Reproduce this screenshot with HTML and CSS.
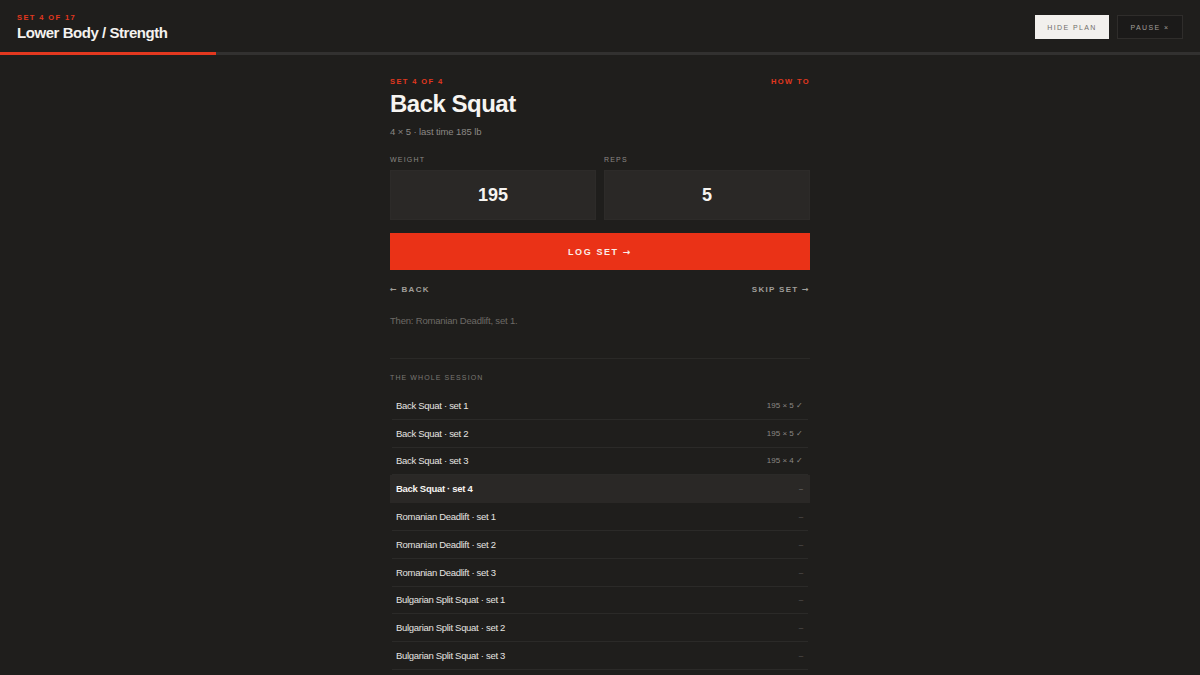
FILE: index.html
```html
<!DOCTYPE html>
<html lang="en">
<head>
    <meta charset="UTF-8">
    <meta name="viewport" content="width=device-width, initial-scale=1.0">
    <title>Lower Body / Strength</title>
    <link rel="stylesheet" href="styles.css">
</head>
<body>
    <header class="topbar">
        <div class="session-info">
            <div class="eyebrow">Set 4 of 17</div>
            <h1 class="session-title">Lower Body / Strength</h1>
        </div>
        <div class="topbar-actions">
            <button class="btn-light">Hide plan</button>
            <button class="btn-ghost">Pause &times;</button>
        </div>
    </header>
    <div class="progress"><div class="progress-fill" style="width: 18%"></div></div>

    <main class="workout">
        <div class="exercise-head">
            <span class="eyebrow">Set 4 of 4</span>
            <a class="eyebrow how-to" href="#">How to</a>
        </div>
        <h2 class="exercise-name">Back Squat</h2>
        <p class="exercise-meta">4 &times; 5 &middot; last time 185 lb</p>

        <form class="set-form" id="set-form">
            <div class="field">
                <label for="weight">Weight</label>
                <input type="text" id="weight" name="weight" value="195">
            </div>
            <div class="field">
                <label for="reps">Reps</label>
                <input type="text" id="reps" name="reps" value="5">
            </div>
            <button type="submit" class="btn-log">Log set <span class="arrow">&rarr;</span></button>
        </form>

        <div class="set-nav">
            <a href="#"><span class="arrow">&larr;</span> Back</a>
            <a href="#">Skip set <span class="arrow">&rarr;</span></a>
        </div>
        <p class="up-next">Then: Romanian Deadlift, set 1.</p>

        <section class="plan">
            <h3 class="plan-title">The whole session</h3>
            <ul class="plan-list">
                <li><span>Back Squat &middot; set 1</span><span class="result">195 &times; 5 &#10003;</span></li>
                <li><span>Back Squat &middot; set 2</span><span class="result">195 &times; 5 &#10003;</span></li>
                <li><span>Back Squat &middot; set 3</span><span class="result">195 &times; 4 &#10003;</span></li>
                <li class="current"><span>Back Squat &middot; set 4</span><span class="pending">&ndash;</span></li>
                <li><span>Romanian Deadlift &middot; set 1</span><span class="pending">&ndash;</span></li>
                <li><span>Romanian Deadlift &middot; set 2</span><span class="pending">&ndash;</span></li>
                <li><span>Romanian Deadlift &middot; set 3</span><span class="pending">&ndash;</span></li>
                <li><span>Bulgarian Split Squat &middot; set 1</span><span class="pending">&ndash;</span></li>
                <li><span>Bulgarian Split Squat &middot; set 2</span><span class="pending">&ndash;</span></li>
                <li><span>Bulgarian Split Squat &middot; set 3</span><span class="pending">&ndash;</span></li>
            </ul>
        </section>
    </main>
</body>
</html>
```

FILE: styles.css
```css
body {
    font-family: "Liberation Sans", Arial, sans-serif;
    background-color: #1f1e1c;
    color: #f2f0ed;
    margin: 0;
    padding: 0;
    overflow: hidden;
}
a {
    text-decoration: none;
}
button {
    font-family: inherit;
    cursor: pointer;
}
.arrow {
    font-family: "DejaVu Sans", sans-serif;
    font-weight: 700;
}

/* top bar */
.topbar {
    height: 52px;
    padding: 0 17px;
    box-sizing: border-box;
    display: flex;
    justify-content: space-between;
    align-items: center;
}
.session-info {
    padding-top: 3px;
}
.eyebrow {
    display: block;
    font-size: 7.5px;
    line-height: 10px;
    font-weight: 700;
    letter-spacing: 1.4px;
    text-transform: uppercase;
    color: #e2381f;
}
.session-title {
    margin: 0;
    font-size: 15px;
    line-height: 20px;
    font-weight: 700;
    letter-spacing: -0.45px;
    color: #f4f2ef;
}
.topbar-actions {
    display: flex;
    gap: 8px;
    padding-top: 2px;
}
.btn-light,
.btn-ghost {
    height: 24px;
    padding: 0;
    font-size: 7px;
    letter-spacing: 1.4px;
    text-transform: uppercase;
    white-space: nowrap;
    border: 1px solid transparent;
}
.btn-light {
    background-color: #f2f0ed;
    color: #716e6a;
    border-color: #f2f0ed;
    width: 74px;
}
.btn-ghost {
    background-color: #1b1a19;
    color: #a19e9a;
    border-color: #2f2d2b;
    width: 66px;
}
.progress {
    height: 3px;
    background-color: #323130;
}
.progress-fill {
    height: 100%;
    background-color: #e2381f;
}

/* current exercise */
.workout {
    width: 420px;
    margin: 0 auto;
    padding-top: 22px;
}
.exercise-head {
    display: flex;
    justify-content: space-between;
}
.exercise-name {
    margin: 3px 0 0;
    font-size: 24px;
    line-height: 28px;
    font-weight: 700;
    letter-spacing: -0.5px;
    color: #f6f4f1;
}
.exercise-meta {
    margin: 7px 0 0;
    font-size: 9.5px;
    line-height: 14px;
    letter-spacing: -0.1px;
    color: #8b8884;
}
.set-form {
    margin-top: 16px;
    display: grid;
    grid-template-columns: 1fr 1fr;
    gap: 0 8px;
}
.field label {
    display: block;
    font-size: 7px;
    line-height: 10px;
    letter-spacing: 1.2px;
    text-transform: uppercase;
    color: #8b8884;
    margin-bottom: 5px;
}
.field input {
    width: 100%;
    height: 50px;
    box-sizing: border-box;
    background-color: #2a2826;
    border: 1px solid #2d2b29;
    color: #f6f4f1;
    font-family: inherit;
    font-size: 18px;
    font-weight: 700;
    text-align: center;
    outline: none;
}
.btn-log {
    grid-column: 1 / 3;
    margin-top: 13px;
    height: 37px;
    background-color: #ea3217;
    color: #fbeee9;
    border: none;
    font-size: 9px;
    font-weight: 700;
    letter-spacing: 1.6px;
    text-transform: uppercase;
}
.set-nav {
    margin-top: 15px;
    display: flex;
    justify-content: space-between;
}
.set-nav a {
    font-size: 8px;
    line-height: 10px;
    font-weight: 700;
    letter-spacing: 1.3px;
    text-transform: uppercase;
    color: #a19e9a;
}
.up-next {
    margin: 20px 0 0;
    font-size: 9.5px;
    line-height: 12px;
    letter-spacing: -0.2px;
    color: #6d6a66;
}

/* session plan */
.plan {
    margin-top: 31px;
    border-top: 1px solid #2a2927;
    padding-top: 14px;
}
.plan-title {
    margin: 0 0 9px;
    font-size: 7px;
    line-height: 10px;
    font-weight: 400;
    letter-spacing: 1.1px;
    text-transform: uppercase;
    color: #7a7773;
}
.plan-list {
    list-style: none;
    margin: 0;
    padding: 0;
}
.plan-list li {
    height: 27.8px;
    box-sizing: border-box;
    margin: 0 2px;
    padding: 0 5px 0 4px;
    display: flex;
    justify-content: space-between;
    align-items: center;
    border-bottom: 1px solid #2b2a28;
    font-size: 9.5px;
    letter-spacing: -0.3px;
    color: #e6e4e1;
}
.plan-list li.current {
    margin: 0;
    padding: 0 7px 0 6px;
    background-color: #2a2826;
    border-bottom-color: #2a2826;
    font-weight: 700;
    color: #f6f4f1;
}
.result {
    font-size: 8px;
    letter-spacing: 0;
    color: #8b8884;
}
.pending {
    font-size: 8px;
    color: #5f5c59;
}
```
